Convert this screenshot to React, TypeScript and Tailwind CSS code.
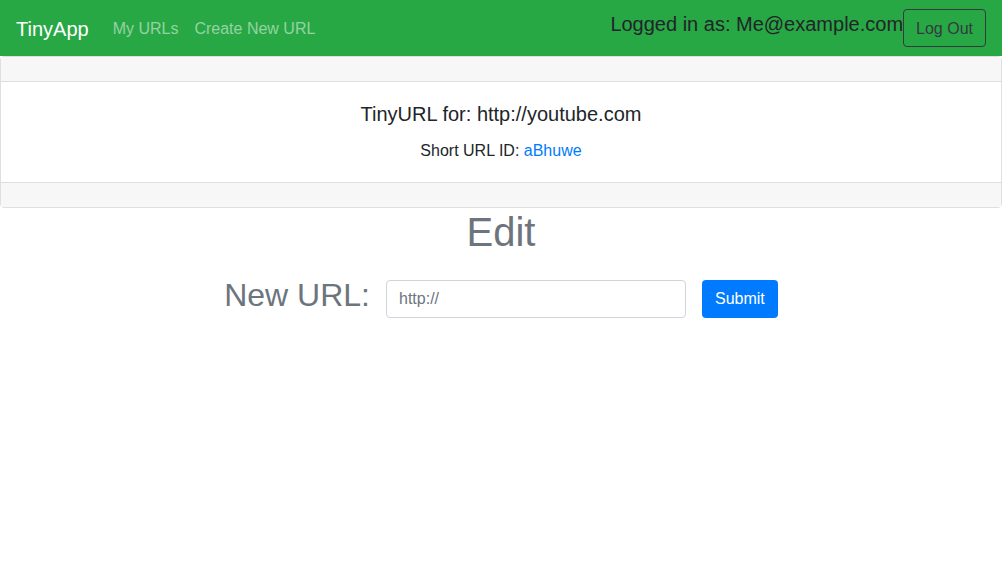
import React from 'react'

function NavBar() {
  return (
    <nav className="flex h-[56px] items-center bg-[#28a745] px-4 pt-[2px]">
      <a className="mr-4 py-[5px] text-[20px] leading-[30px] text-white">TinyApp</a>
      <div className="flex">
        <a className="px-2 py-2 text-[16px] leading-6 text-white/50">My URLs</a>
        <a className="px-2 py-2 text-[16px] leading-6 text-white/50">Create New URL</a>
      </div>
      <div className="ml-auto flex items-start">
        <span className="mt-[1px] text-[20px] leading-6 text-[#212529]">Logged in as: Me@example.com</span>
        <button className="mt-[-2px] h-[38px] rounded-[4px] border border-[#343a40] px-3 pt-[2px] text-[16px] text-[#343a40]">
          Log Out
        </button>
      </div>
    </nav>
  )
}

function UrlCard() {
  return (
    <div className="rounded-[4px] border border-[#dfdfdf] text-center">
      <div className="h-[25px] border-b border-[#dfdfdf] bg-[#f7f7f7]" />
      <div className="px-5 pb-[19px] pt-5">
        <h5 className="mb-[13px] text-[20px] leading-6 text-[#212529]">TinyURL for: http://youtube.com</h5>
        <p className="text-[16px] leading-6 text-[#212529]">
          Short URL ID: <a className="text-[#007bff]">aBhuwe</a>
        </p>
      </div>
      <div className="h-[25px] border-t border-[#dfdfdf] bg-[#f7f7f7]" />
    </div>
  )
}

function EditForm() {
  return (
    <div className="text-center">
      <h1 className="mb-2 text-[40px] leading-[48px] text-[#6c757d]">Edit</h1>
      <form className="flex items-center justify-center pt-3" onSubmit={e => e.preventDefault()}>
        <label className="mb-2 mr-4 text-[32px] leading-[38px] text-[#6c757d]">New URL:</label>
        <input
          type="text"
          placeholder="http://"
          className="h-[38px] w-[300px] rounded-[4px] border border-[#ced4da] px-3 text-[16px] text-[#495057] placeholder:text-[#6c757d]"
        />
        <button type="submit" className="ml-4 h-[38px] rounded-[4px] bg-[#007bff] px-[13px] text-[16px] text-white">
          Submit
        </button>
      </form>
    </div>
  )
}

export default function App() {
  return (
    <div className="min-h-[569px] bg-white font-['Liberation_Sans',Arial,sans-serif]">
      <NavBar />
      <UrlCard />
      <EditForm />
    </div>
  )
}
